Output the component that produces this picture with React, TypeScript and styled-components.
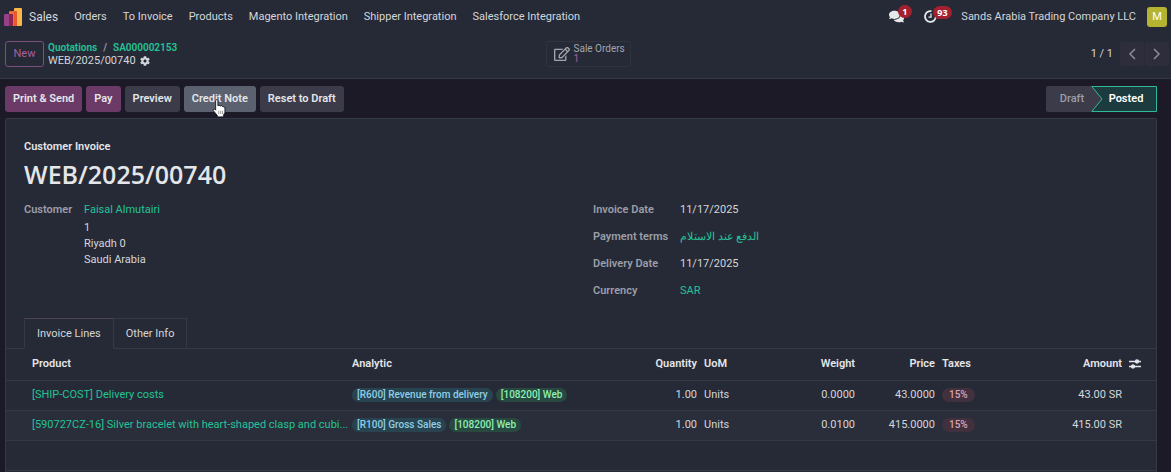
import React from 'react';
import styled, { createGlobalStyle } from 'styled-components';
import { FaCog, FaComments, FaRegEdit } from 'react-icons/fa';

const c = {
  panel: '#262a36',
  page: '#1b1a26',
  line: '#353945',
  text: '#d3d6da',
  strong: '#e4e6ea',
  muted: '#9b9ea8',
  link: '#24c398',
  plum: '#6b3a66',
};

const Global = createGlobalStyle`
  * { box-sizing: border-box; }
  body {
    margin: 0;
    background: ${c.page};
    color: ${c.text};
    font: 400 11px/16px Roboto, "Noto Sans", sans-serif;
  }
  button { font: inherit; color: inherit; background: none; border: 0; padding: 0; cursor: pointer; }
  a { color: inherit; text-decoration: none; }
  h1, h2, dl, dd, dt, p { margin: 0; }
  svg { display: block; }
`;

const Header = styled.header`
  background: ${c.panel};
  border-bottom: 1px solid ${c.line};
`;

const Navbar = styled.nav`
  display: flex;
  align-items: center;
  height: 32px;
  padding: 1px 4px 0;
`;

const AppName = styled.a`
  margin: 0 16px 0 7px;
  font-size: 12px;
`;

const Menu = styled.div`
  display: flex;
  flex: 1;
  gap: 16px;
`;

const Systray = styled.div`
  display: flex;
  align-items: center;
`;

const TrayButton = styled.button<{ $gap: number }>`
  position: relative;
  margin-right: ${(p) => p.$gap}px;
  color: #e6e8ea;
`;

const Count = styled.span`
  position: absolute;
  left: 9px;
  top: -4px;
  min-width: 12px;
  height: 13px;
  padding: 0 4px;
  border-radius: 7px;
  background: #a3212f;
  color: #fff;
  font: 700 9px/13px "Noto Sans", sans-serif;
`;

const Avatar = styled.button`
  width: 20px;
  height: 20px;
  margin-left: 11px;
  border-radius: 3px;
  background: #b5b431;
  color: #fff;
`;

const ControlPanel = styled.div`
  display: grid;
  grid-template-columns: 1fr auto 1fr;
  align-items: center;
  padding: 8px 0 11px 5px;
`;

const Crumbs = styled.div`
  display: flex;
  align-items: center;
  gap: 4px;
`;

const NewButton = styled.button`
  height: 26px;
  width: 39px;
  border: 1px solid #7c4f7d;
  border-radius: 3px;
  color: #a85f9f;
`;

const Trail = styled.div`
  padding-top: 1px;
  line-height: 13px;
`;

const TrailLinks = styled.div`
  display: flex;
  gap: 6px;
  font-weight: 600;
  font-size: 10px;
  a { color: ${c.link}; }
  span { color: ${c.muted}; }
`;

const Current = styled.div`
  display: flex;
  align-items: center;
  gap: 4px;
`;

const StatButton = styled.button`
  display: flex;
  align-items: center;
  gap: 4px;
  height: 26px;
  width: 85px;
  padding-left: 7px;
  border: 1px solid #30343f;
  border-radius: 3px;
  color: #a3a6b0;
  font-size: 10px;
  line-height: 11px;
  text-align: left;
  white-space: nowrap;
`;

const StatValue = styled.span`
  display: block;
  color: #a85f9f;
  line-height: 10px;
`;

const Pager = styled.div`
  display: flex;
  align-items: center;
  justify-content: flex-end;
  padding-right: 2px;
`;

const PageButtons = styled.div`
  display: flex;
  gap: 1px;
  margin-left: 7px;
`;

const PageButton = styled.button`
  display: grid;
  place-items: center;
  width: 24px;
  height: 24px;
  border-radius: 2px;
  background: #2e2d3c;
  color: #8b8d98;
`;

const Main = styled.main`
  padding: 7px 14px 0 5px;
`;

const StatusBar = styled.div`
  display: flex;
  justify-content: space-between;
  margin-bottom: 6px;
`;

const Actions = styled.div`
  display: flex;
  gap: 4px;
`;

const Action = styled.button<{ $tone?: 'primary' | 'hover' }>`
  position: relative;
  height: 26px;
  padding: 0 8px;
  border-radius: 3px;
  font-weight: 600;
  color: ${c.strong};
  background: ${(p) => (p.$tone === 'primary' ? c.plum : p.$tone === 'hover' ? '#5b616e' : '#3b3b49')};
`;

const Pointer = styled.svg`
  position: absolute;
  left: 28px;
  top: 13px;
`;

const Steps = styled.div`
  display: flex;
  font-weight: 600;
`;

const Draft = styled.button`
  width: 58px;
  height: 26px;
  padding-right: 6px;
  background: #3b3b49;
  color: ${c.muted};
  font-weight: 500;
  border-radius: 2px;
`;

const Posted = styled.button`
  position: relative;
  width: 66px;
  height: 26px;
  margin-left: -13px;
  padding-left: 4px;
  color: #fff;
  svg { position: absolute; inset: 0; }
  span { position: relative; }
`;

const Sheet = styled.section`
  padding: 20px 0 3px;
  background: ${c.panel};
  border: 1px solid ${c.line};
  border-bottom: 0;
  border-radius: 2px 2px 0 0;
`;

const Intro = styled.div`
  padding: 0 18px;
`;

const Kind = styled.h2`
  font-size: 11px;
  line-height: 16px;
  font-weight: 600;
  color: ${c.strong};
`;

const Title = styled.h1`
  font-family: "Open Sans", "Noto Sans", sans-serif;
  font-size: 25px;
  line-height: 38px;
  font-weight: 600;
  color: ${c.strong};
`;

const Groups = styled.div`
  display: grid;
  grid-template-columns: 1fr 1fr;
  gap: 24px;
  padding-top: 9px;
`;

const Fields = styled.dl<{ $label: number }>`
  display: grid;
  grid-template-columns: ${(p) => p.$label}px 1fr;
  align-content: start;
  row-gap: 11px;
  dt { color: ${c.muted}; font-weight: 600; }
  dd a { color: ${c.link}; }
`;

const Address = styled.p`
  padding-top: 2px;
`;

const Tabs = styled.div`
  display: flex;
  height: 31px;
  margin-top: 19px;
  padding-left: 18px;
  border-bottom: 1px solid ${c.line};
`;

const Tab = styled.button<{ $active?: boolean }>`
  height: 31px;
  padding: 0 12px;
  border: 1px solid ${c.line};
  border-left-width: ${(p) => (p.$active ? 1 : 0)}px;
  border-top-color: ${(p) => (p.$active ? '#50415a' : c.line)};
  border-bottom-color: ${(p) => (p.$active ? c.panel : c.line)};
`;

const Lines = styled.table`
  width: 100%;
  table-layout: fixed;
  border-collapse: collapse;
  th { height: 31px; font-weight: 600; color: ${c.strong}; }
  td { height: 30px; }
`;

const Row = styled.tr<{ $striped?: boolean }>`
  border-bottom: 1px solid ${c.line};
  background: ${(p) => (p.$striped ? '#2a2e3a' : 'transparent')};
`;

const Cell = styled.td<{ $end?: boolean; $first?: boolean }>`
  padding: ${(p) => (p.$first ? '0 0 0 26px' : '0 4px 0 3px')};
  text-align: ${(p) => (p.$end ? 'right' : 'left')};
  white-space: nowrap;
  overflow: hidden;
  text-overflow: ellipsis;
  a { color: ${c.link}; }
`;

const Col = styled.col<{ $w?: number }>`
  width: ${(p) => (p.$w ? `${p.$w}px` : 'auto')};
`;

const ColumnsButton = styled.button`
  vertical-align: middle;
`;

const tones = {
  blue: ['#284451', '#8fcfe6'],
  green: ['#27493f', '#8df0b4'],
  red: ['#41303d', '#dfa3b0'],
};

const Tag = styled.span<{ $tone: keyof typeof tones }>`
  display: inline-block;
  height: 14px;
  margin-right: 3px;
  padding: 0 ${(p) => (p.$tone === 'red' ? 7 : 5)}px;
  border-radius: 7px;
  background: ${(p) => tones[p.$tone][0]};
  color: ${(p) => tones[p.$tone][1]};
  font-size: 10px;
  line-height: 14px;
  font-weight: 500;
  vertical-align: middle;
`;

const menu = ['Orders', 'To Invoice', 'Products', 'Magento Integration', 'Shipper Integration', 'Salesforce Integration'];

const lines = [
  { product: '[SHIP-COST] Delivery costs', account: '[R600] Revenue from delivery', qty: '1.00', weight: '0.0000', price: '43.0000', amount: '43.00 SR' },
  { product: '[590727CZ-16] Silver bracelet with heart-shaped clasp and cubi...', account: '[R100] Gross Sales', qty: '1.00', weight: '0.0100', price: '415.0000', amount: '415.00 SR' },
];

const Chevron = ({ d }: { d: string }) => (
  <svg width="12" height="14" viewBox="0 0 12 14" fill="none" stroke="currentColor" strokeWidth="1.5" aria-hidden="true">
    <path d={d} />
  </svg>
);

export default function App() {
  return (
    <>
      <Global />
      <Header>
        <Navbar>
          <svg width="18" height="18" viewBox="0 0 18 18" aria-hidden="true">
            <rect x="10" y="0" width="8" height="18" rx="1" fill="#f9b745" />
            <rect x="5" y="3" width="8" height="15" rx="1" fill="#ee6b43" />
            <rect x="0" y="6" width="9" height="12" rx="1" fill="#96418a" />
            <path d="M5 6h3a1 1 0 0 1 1 1v11H5z" fill="#8d2450" />
            <path d="M10 3h2a1 1 0 0 1 1 1v14h-3z" fill="#e8592f" />
          </svg>
          <AppName href="#">Sales</AppName>
          <Menu>{menu.map((m) => <a key={m} href="#">{m}</a>)}</Menu>
          <Systray>
            <TrayButton $gap={20} aria-label="Messages"><FaComments size={15} /><Count>1</Count></TrayButton>
            <TrayButton $gap={24} aria-label="Activities">
              <svg width="13" height="13" viewBox="0 0 13 13" fill="none" stroke="currentColor" strokeWidth="1.800">
                <path d="M7.500 1.200A5.400 5.400 0 1 0 11.800 7" />
                <path d="M7 3.500V7.200H4.500" strokeWidth="1.300" />
              </svg>
              <Count>93</Count>
            </TrayButton>
            <span>Sands Arabia Trading Company LLC</span>
            <Avatar>M</Avatar>
          </Systray>
        </Navbar>
        <ControlPanel>
          <Crumbs>
            <NewButton>New</NewButton>
            <Trail>
              <TrailLinks><a href="#">Quotations</a><span>/</span><a href="#">SA000002153</a></TrailLinks>
              <Current>WEB/2025/00740 <button aria-label="Actions"><FaCog size={10} /></button></Current>
            </Trail>
          </Crumbs>
          <StatButton>
            <FaRegEdit size={16} />
            <span>Sale Orders<StatValue>1</StatValue></span>
          </StatButton>
          <Pager>
            <span>1 / 1</span>
            <PageButtons>
              <PageButton aria-label="Previous"><Chevron d="M9 2L4 7l5 5" /></PageButton>
              <PageButton aria-label="Next"><Chevron d="M3 2l5 5-5 5" /></PageButton>
            </PageButtons>
          </Pager>
        </ControlPanel>
      </Header>
      <Main>
        <StatusBar>
          <Actions>
            <Action $tone="primary">Print &amp; Send</Action>
            <Action $tone="primary">Pay</Action>
            <Action>Preview</Action>
            <Action $tone="hover">
              Credit Note
              <Pointer width="14" height="19" viewBox="0 0 12 17" aria-hidden="true">
                <path d="M3 1.500a1 1 0 0 1 2 0V6l1-.5 1.300.8 1.200-.3 1 .9 1.200.1.600 1V12l-1.300 2.500V16H4.500v-1.300L1 10.500C.3 9.500 1.300 8.500 2.200 9.200L3 10z" fill="#fff" stroke="#16161c" strokeWidth="0.800" />
                <path d="M5.800 10.500v3M7.500 10.500v3M9.200 10.500v3" stroke="#16161c" strokeWidth="0.400" />
              </Pointer>
            </Action>
            <Action>Reset to Draft</Action>
          </Actions>
          <Steps>
            <Draft>Draft</Draft>
            <Posted>
              <svg width="66" height="26" viewBox="0 0 66 26" aria-hidden="true">
                <path d="M.8.500H65.500v25H.8L11 13z" fill="#1c3b3f" stroke="#2fb99a" />
              </svg>
              <span>Posted</span>
            </Posted>
          </Steps>
        </StatusBar>
        <Sheet>
          <Intro>
            <Kind>Customer Invoice</Kind>
            <Title>WEB/2025/00740</Title>
            <Groups>
              <Fields $label={60}>
                <dt>Customer</dt>
                <dd>
                  <a href="#">Faisal Almutairi</a>
                  <Address>1<br />Riyadh 0<br />Saudi Arabia</Address>
                </dd>
              </Fields>
              <Fields $label={87}>
                <dt>Invoice Date</dt><dd>11/17/2025</dd>
                <dt>Payment terms</dt><dd><a href="#" lang="ar">الدفع عند الاستلام</a></dd>
                <dt>Delivery Date</dt><dd>11/17/2025</dd>
                <dt>Currency</dt><dd><a href="#">SAR</a></dd>
              </Fields>
            </Groups>
          </Intro>
          <Tabs role="tablist">
            <Tab role="tab" aria-selected="true" $active>Invoice Lines</Tab>
            <Tab role="tab" aria-selected="false">Other Info</Tab>
          </Tabs>
          <Lines>
            <colgroup>
              <Col /><Col $w={244} /><Col $w={108} /><Col $w={78} /><Col $w={80} /><Col $w={80} /><Col $w={90} /><Col $w={97} /><Col $w={30} />
            </colgroup>
            <thead>
              <Row>
                <Cell as="th" $first>Product</Cell>
                <Cell as="th">Analytic</Cell>
                <Cell as="th" $end>Quantity</Cell>
                <Cell as="th">UoM</Cell>
                <Cell as="th" $end>Weight</Cell>
                <Cell as="th" $end>Price</Cell>
                <Cell as="th">Taxes</Cell>
                <Cell as="th" $end>Amount</Cell>
                <Cell as="th">
                  <ColumnsButton aria-label="Optional columns">
                    <svg width="12" height="12" viewBox="0 0 12 12" stroke="currentColor" strokeWidth="1.300">
                      <path d="M0 3.500h12M0 8.500h12" />
                      <circle cx="8" cy="3.500" r="1.500" fill="currentColor" />
                      <circle cx="4" cy="8.500" r="1.500" fill="currentColor" />
                    </svg>
                  </ColumnsButton>
                </Cell>
              </Row>
            </thead>
            <tbody>
              {lines.map((l, i) => (
                <Row key={l.product} $striped={i % 2 === 1}>
                  <Cell $first><a href="#">{l.product}</a></Cell>
                  <Cell><Tag $tone="blue">{l.account}</Tag><Tag $tone="green">[108200] Web</Tag></Cell>
                  <Cell $end>{l.qty}</Cell>
                  <Cell>Units</Cell>
                  <Cell $end>{l.weight}</Cell>
                  <Cell $end>{l.price}</Cell>
                  <Cell><Tag $tone="red">15%</Tag></Cell>
                  <Cell $end>{l.amount}</Cell>
                  <Cell />
                </Row>
              ))}
              <Row><Cell colSpan={9} /></Row>
            </tbody>
          </Lines>
        </Sheet>
      </Main>
    </>
  );
}
